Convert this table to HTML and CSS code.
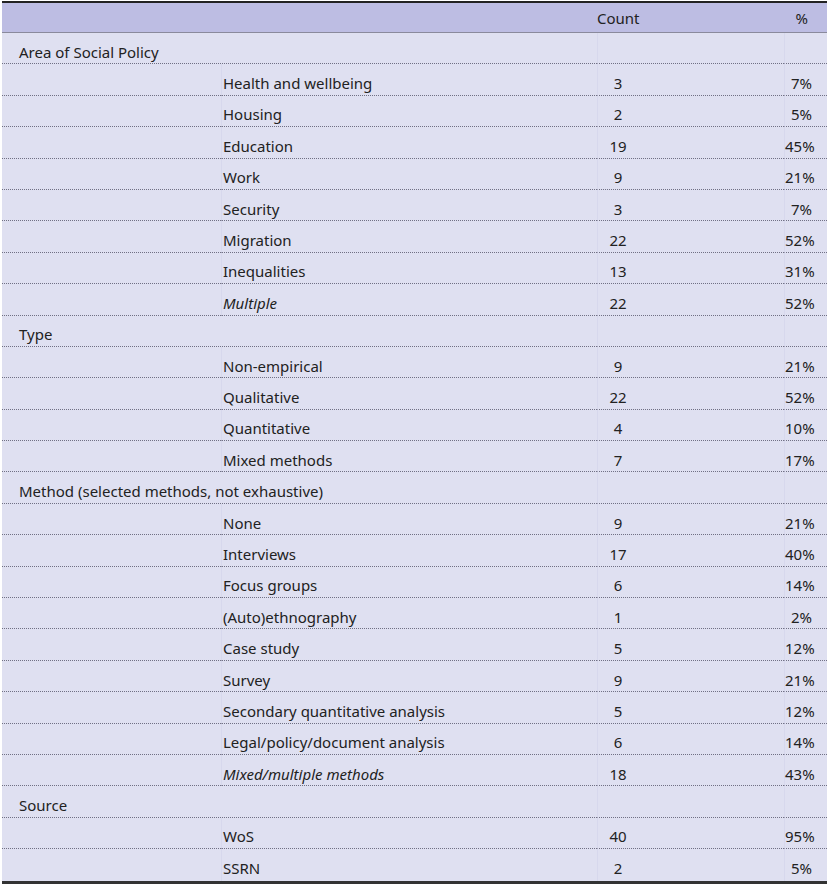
FILE: index.html
```html
<!DOCTYPE html>
<html lang="en">
<head>
    <meta charset="UTF-8">
    <meta name="viewport" content="width=device-width, initial-scale=1.0">
    <title>Reviewed studies by area, type, method and source</title>
    <link rel="stylesheet" href="styles.css">
</head>
<body>
    <table class="data-table">
        <colgroup>
            <col class="col-group">
            <col class="col-label">
            <col class="col-count">
            <col class="col-pct">
        </colgroup>
        <thead>
            <tr>
                <th colspan="2"></th>
                <th class="count"><span>Count</span></th>
                <th class="pct">%</th>
            </tr>
        </thead>
        <tbody>
            <tr class="group"><td colspan="2">Area of Social Policy</td><td class="count"></td><td class="pct"></td></tr>
            <tr><td></td><td class="label">Health and wellbeing</td><td class="count"><span>3</span></td><td class="pct">7%</td></tr>
            <tr><td></td><td class="label">Housing</td><td class="count"><span>2</span></td><td class="pct">5%</td></tr>
            <tr><td></td><td class="label">Education</td><td class="count"><span>19</span></td><td class="pct">45%</td></tr>
            <tr><td></td><td class="label">Work</td><td class="count"><span>9</span></td><td class="pct">21%</td></tr>
            <tr><td></td><td class="label">Security</td><td class="count"><span>3</span></td><td class="pct">7%</td></tr>
            <tr><td></td><td class="label">Migration</td><td class="count"><span>22</span></td><td class="pct">52%</td></tr>
            <tr><td></td><td class="label">Inequalities</td><td class="count"><span>13</span></td><td class="pct">31%</td></tr>
            <tr><td></td><td class="label"><em>Multiple</em></td><td class="count"><span>22</span></td><td class="pct">52%</td></tr>

            <tr class="group"><td colspan="2">Type</td><td class="count"></td><td class="pct"></td></tr>
            <tr><td></td><td class="label">Non-empirical</td><td class="count"><span>9</span></td><td class="pct">21%</td></tr>
            <tr><td></td><td class="label">Qualitative</td><td class="count"><span>22</span></td><td class="pct">52%</td></tr>
            <tr><td></td><td class="label">Quantitative</td><td class="count"><span>4</span></td><td class="pct">10%</td></tr>
            <tr><td></td><td class="label">Mixed methods</td><td class="count"><span>7</span></td><td class="pct">17%</td></tr>

            <tr class="group"><td colspan="2">Method (selected methods, not exhaustive)</td><td class="count"></td><td class="pct"></td></tr>
            <tr><td></td><td class="label">None</td><td class="count"><span>9</span></td><td class="pct">21%</td></tr>
            <tr><td></td><td class="label">Interviews</td><td class="count"><span>17</span></td><td class="pct">40%</td></tr>
            <tr><td></td><td class="label">Focus groups</td><td class="count"><span>6</span></td><td class="pct">14%</td></tr>
            <tr><td></td><td class="label">(Auto)ethnography</td><td class="count"><span>1</span></td><td class="pct">2%</td></tr>
            <tr><td></td><td class="label">Case study</td><td class="count"><span>5</span></td><td class="pct">12%</td></tr>
            <tr><td></td><td class="label">Survey</td><td class="count"><span>9</span></td><td class="pct">21%</td></tr>
            <tr><td></td><td class="label">Secondary quantitative analysis</td><td class="count"><span>5</span></td><td class="pct">12%</td></tr>
            <tr><td></td><td class="label">Legal/policy/document analysis</td><td class="count"><span>6</span></td><td class="pct">14%</td></tr>
            <tr><td></td><td class="label"><em>Mixed/multiple methods</em></td><td class="count"><span>18</span></td><td class="pct">43%</td></tr>

            <tr class="group"><td colspan="2">Source</td><td class="count"></td><td class="pct"></td></tr>
            <tr><td></td><td class="label">WoS</td><td class="count"><span>40</span></td><td class="pct">95%</td></tr>
            <tr><td></td><td class="label">SSRN</td><td class="count"><span>2</span></td><td class="pct">5%</td></tr>
        </tbody>
    </table>
</body>
</html>
```

FILE: styles.css
```css
body {
    margin: 0;
    padding: 1px 4px 0 2px;
    background: #fff;
    font-family: "Noto Sans", "Open Sans", Arial, sans-serif;
    font-size: 15px;
    color: #222;
}
.data-table {
    width: 825px;
    table-layout: fixed;
    border-collapse: separate;
    border-spacing: 0;
    border-top: 2px solid #222;
    border-bottom: 3px solid #333;
}
.col-group {
    width: 219px;
}
.col-label {
    width: 376px;
}
.col-count {
    width: 187px;
}
.col-pct {
    width: 43px;
}
.data-table th {
    background: #bdbde3;
    font-weight: normal;
    height: 30px;
    padding: 0;
    border-bottom: 1px solid #8a8a9c;
    box-sizing: border-box;
    white-space: nowrap;
}
.data-table td {
    background: #dfe0f1;
    height: 31.4px;
    padding: 7px 0 0;
    box-sizing: border-box;
    border-bottom: 1px dotted #707084;
    white-space: nowrap;
}
.data-table tbody tr:last-child td {
    border-bottom: none;
}
.group td:first-child {
    padding-left: 17px;
    text-align: left;
}
.label {
    padding-left: 1px !important;
    text-align: left;
    border-left: 1px solid #d7d8ed;
}
.count {
    text-align: left;
    border-left: 1px solid #d7d8ed;
}
.count span {
    display: inline-block;
    width: 40px;
    text-align: center;
}
.pct {
    text-align: right;
    padding-right: 15px !important;
    border-left: 1px solid #d7d8ed;
    overflow: visible;
}
.data-table th.count,
.data-table th.pct {
    border-left: none;
}
.data-table th.pct {
    padding-right: 19px !important;
}
em {
    font-style: italic;
}
```
